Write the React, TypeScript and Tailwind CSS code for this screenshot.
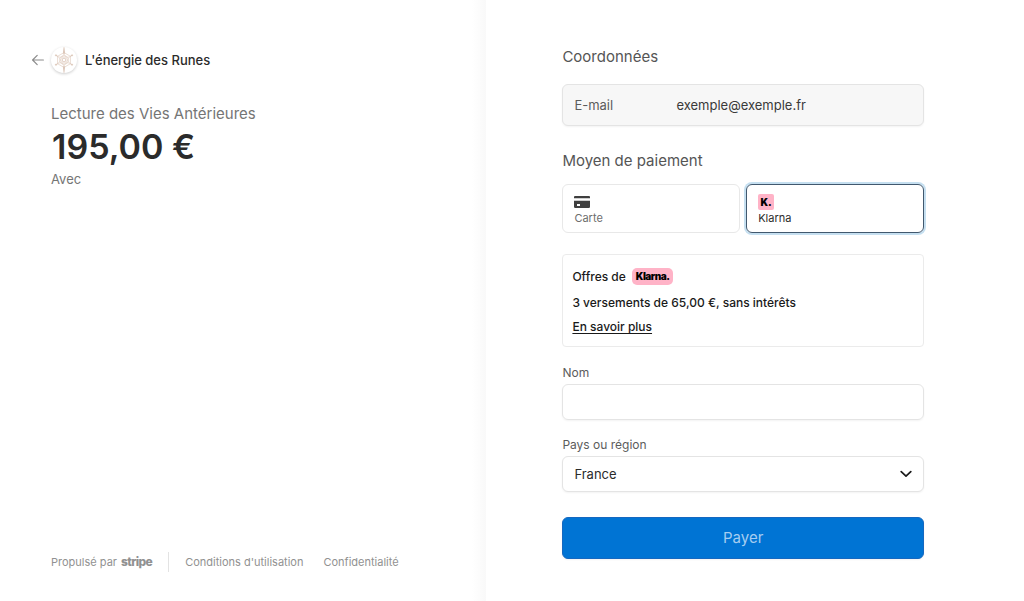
import React, { useState } from 'react';

type Method = 'card' | 'klarna';

const countries = ['France', 'Belgique', 'Suisse', 'Luxembourg'];

const footerLinks = [
    { id: 'terms', label: "Conditions d'utilisation" },
    { id: 'privacy', label: 'Confidentialité' },
];

// Icons
const BackIcon = () => (
    <svg className="h-3 w-3 text-[#8c8c8c]" viewBox="0 0 12 12" fill="none" stroke="currentColor" strokeWidth={1.2} strokeLinecap="round" strokeLinejoin="round">
        <path d="M11.4 6H.8M5.2 1.4.6 6l4.6 4.6" />
    </svg>
);

const RuneLogo = () => (
    <svg className="h-[26px] w-[26px]" viewBox="0 0 28 28" fill="none" stroke="#dfcabc" strokeWidth={0.7}>
        <path d="M14 .2 14.7 7h-1.4ZM14 27.800 14.700 21h-1.400Z" fill="#c8a793" stroke="#c8a793" strokeWidth={0.3} />
        <path d="m14 6 6.9 4v8L14 22l-6.9-4v-8Z" />
        <path d="m14 7.5 5.6 9.7H8.4ZM14 20.5 8.4 10.8h11.2Z" stroke="#e6d6cb" />
        <circle cx="14" cy="14" r="4.6" />
        <circle cx="14" cy="14" r="2" stroke="#cfb19f" />
        <path d="m5 8.8 3.2 1.8M23 8.8l-3.2 1.8M5 19.2l3.2-1.8M23 19.2l-3.2-1.8" stroke="#d3b9a8" />
        <circle cx="5.4" cy="9" r=".7" fill="#d3b9a8" />
        <circle cx="22.6" cy="9" r=".7" fill="#d3b9a8" />
        <circle cx="5.4" cy="19" r=".7" fill="#d3b9a8" />
        <circle cx="22.6" cy="19" r=".7" fill="#d3b9a8" />
    </svg>
);

const CardIcon = () => (
    <svg className="h-4 w-4" viewBox="0 0 16 16" fill="#3f3f3f">
        <path d="M1 2h14a1 1 0 0 1 1 1v1.300H0V3a1 1 0 0 1 1-1Z" />
        <path fillRule="evenodd" d="M0 6.700h16v6.100a1.200 1.200 0 0 1-1.200 1.200H1.200A1.200 1.200 0 0 1 0 12.800Zm3 3.300v2h3v-2Z" />
    </svg>
);

const ChevronIcon = () => (
    <svg className="pointer-events-none absolute top-3 right-3 h-3 w-3" viewBox="0 0 12 12" fill="none" stroke="#1a1a1a" strokeWidth={1.7} strokeLinecap="round" strokeLinejoin="round">
        <path d="m1.200 3.600 4.800 4.600 4.800-4.600" />
    </svg>
);

const KlarnaIcon = () => (
    <span aria-hidden="true" className="flex h-4 w-4 items-center justify-center rounded-xs bg-[#ffb3c7] text-[10px] leading-4 font-black text-black">K.</span>
);

const App: React.FC = () => {
    const [method, setMethod] = useState<Method>('klarna');
    const [name, setName] = useState('');
    const [country, setCountry] = useState('France');

    const methods = [
        { id: 'card' as Method, label: 'Carte', icon: <CardIcon /> },
        { id: 'klarna' as Method, label: 'Klarna', icon: <KlarnaIcon /> },
    ];

    return (
        <div className="flex min-h-screen bg-white font-['Inter','Liberation_Sans',sans-serif] text-[13px] leading-4 text-[#2b2b2b]">
            <section className="flex w-[47.5%] shrink-0 flex-col bg-linear-to-l from-[#f9f9f9] to-white to-[14px] pt-[47px] pb-[29px] pl-8">
                <header className="flex items-center">
                    <a href="#" aria-label="Retour" className="mr-[7px]"><BackIcon /></a>
                    <div className="mr-2 rounded-full bg-white shadow-[0_1px_3px_rgba(0,0,0,0.2)]"><RuneLogo /></div>
                    <span className="font-medium">L'énergie des Runes</span>
                </header>

                <main className="grow pt-[31px] pl-[19px]">
                    <h1 className="text-[15px] leading-5 text-[#757575]">Lecture des Vies Antérieures</h1>
                    <p className="mt-[3px] pl-px text-[34px] leading-10 font-semibold">195,00 €</p>
                    <p className="mt-1 text-[#757575]">Avec</p>
                </main>

                <footer className="flex items-center pl-[19px] text-[11px] text-[#919191]">
                    <a href="#" className="flex h-5 items-center gap-1 border-r border-[#e3e3e3] pr-4">
                        Propulsé par <span className="text-[12px] font-extrabold tracking-tighter">stripe</span>
                    </a>
                    <nav className="flex gap-5 pl-4">
                        {footerLinks.map(link => (
                            <a key={link.id} href="#">{link.label}</a>
                        ))}
                    </nav>
                </footer>
            </section>

            <form onSubmit={e => e.preventDefault()} className="flex grow flex-col pt-[47px] pr-[100px] pb-10 pl-[76px]">
                <h2 className="text-[15px] leading-5 text-[#555555]">Coordonnées</h2>
                <div className="mt-[17px] flex h-[42px] items-center rounded-md border border-[#e4e4e4] bg-[#f7f7f7] px-[11px] shadow-xs">
                    <label htmlFor="email" className="w-[102px] text-[#5c5c5c]">E-mail</label>
                    <input id="email" type="email" readOnly value="exemple@exemple.fr" className="min-w-0 grow bg-transparent text-[#3a3a3a] outline-none" />
                </div>

                <fieldset className="mt-[25px]">
                    <legend className="text-[15px] leading-5 text-[#555555]">Moyen de paiement</legend>
                    <div className="mt-[13px] grid grid-cols-2 gap-[6px]">
                        {methods.map(m => (
                            <label
                                key={m.id}
                                className={`flex h-[49px] cursor-pointer flex-col justify-end rounded-md border px-[11px] pb-[6px] text-[11px] ${method === m.id ? 'border-[#41586e] text-[#2b2b2b] shadow-[0_0_0_2px_#c5dff0]' : 'border-[#e8e8e8] text-[#6d6d6d]'}`}
                            >
                                <input
                                    type="radio"
                                    name="method"
                                    checked={method === m.id}
                                    onChange={() => setMethod(m.id)}
                                    className="sr-only"
                                />
                                {m.icon}
                                {m.label}
                            </label>
                        ))}
                    </div>
                </fieldset>

                <div className="mt-[21px] rounded-sm border border-[#ebebeb] px-[9px] pt-[13px] pb-[11px] text-[12px] font-medium text-[#1a1a1a]">
                    <div className="flex items-center gap-[6px]">
                        Offres de
                        <span className="rounded-[5px] bg-[#ffb3c7] px-1 text-[10px] leading-[17px] font-black tracking-tighter text-black">Klarna.</span>
                    </div>
                    <p className="mt-[10px]">3 versements de 65,00 €, sans intérêts</p>
                    <a href="#" className="mt-2 block w-fit underline underline-offset-2">En savoir plus</a>
                </div>

                <label htmlFor="name" className="mt-[18px] text-[12px] text-[#5c5c5c]">Nom</label>
                <input
                    id="name"
                    type="text"
                    value={name}
                    onChange={e => setName(e.target.value)}
                    className="mt-[3px] h-9 rounded-md border border-[#e4e4e4] px-[11px] shadow-xs outline-none"
                />

                <label htmlFor="country" className="mt-[17px] text-[12px] text-[#5c5c5c]">Pays ou région</label>
                <div className="relative mt-[3px]">
                    <select
                        id="country"
                        value={country}
                        onChange={e => setCountry(e.target.value)}
                        className="h-9 w-full appearance-none rounded-md border border-[#e4e4e4] bg-white px-[11px] shadow-xs outline-none"
                    >
                        {countries.map(c => (
                            <option key={c}>{c}</option>
                        ))}
                    </select>
                    <ChevronIcon />
                </div>

                <button type="submit" className="mt-[25px] h-[42px] rounded-md border border-[#1568c0] bg-[#0074d4] text-[15px] text-[#a6cdf0] shadow-xs">Payer</button>
            </form>
        </div>
    );
};

export default App;
